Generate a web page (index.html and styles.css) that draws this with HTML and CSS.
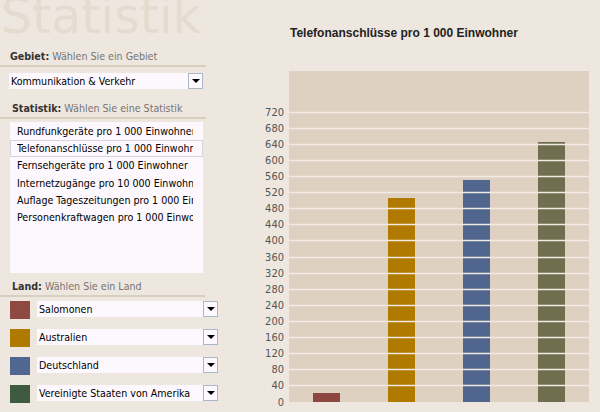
FILE: index.html
```html
<!DOCTYPE html>
<html lang="de">
<head>
<meta charset="utf-8">
<title>Statistik</title>
<link rel="stylesheet" href="styles.css">
</head>
<body>
<div class="page">
  <aside class="sidebar">
    <div class="brand">Statistik</div>

    <div class="heading h-gebiet"><b>Gebiet:</b> Wählen Sie ein Gebiet</div>
    <div class="select sel-gebiet">
      <span class="sel-text">Kommunikation &amp; Verkehr</span>
      <span class="sel-btn"><span class="tri"></span></span>
    </div>

    <div class="heading h-stat"><b>Statistik:</b> Wählen Sie eine Statistik</div>
    <ul class="listbox">
      <li><span class="item">Rundfunkgeräte pro 1 000 Einwohner</span></li>
      <li class="selected"><span class="item">Telefonanschlüsse pro 1 000 Einwohner</span></li>
      <li><span class="item">Fernsehgeräte pro 1 000 Einwohner</span></li>
      <li><span class="item">Internetzugänge pro 10 000 Einwohner</span></li>
      <li><span class="item">Auflage Tageszeitungen pro 1 000 Einwohner</span></li>
      <li><span class="item">Personenkraftwagen pro 1 000 Einwohner</span></li>
    </ul>

    <div class="heading h-land"><b>Land:</b> Wählen Sie ein Land</div>
    <div class="countries">
      <div class="country">
        <span class="swatch sw-red"></span>
        <div class="select sel-country"><span class="sel-text">Salomonen</span><span class="sel-btn"><span class="tri"></span></span></div>
      </div>
      <div class="country">
        <span class="swatch sw-gold"></span>
        <div class="select sel-country"><span class="sel-text">Australien</span><span class="sel-btn"><span class="tri"></span></span></div>
      </div>
      <div class="country">
        <span class="swatch sw-blue"></span>
        <div class="select sel-country"><span class="sel-text">Deutschland</span><span class="sel-btn"><span class="tri"></span></span></div>
      </div>
      <div class="country">
        <span class="swatch sw-green"></span>
        <div class="select sel-country"><span class="sel-text">Vereinigte Staaten von Amerika</span><span class="sel-btn"><span class="tri"></span></span></div>
      </div>
    </div>
  </aside>

  <main class="main">
    <h1 class="chart-title">Telefonanschlüsse pro 1 000 Einwohner</h1>
    <svg class="chart" width="360" height="341" viewBox="0 0 360 341">
      <rect class="plot" x="49" y="0" width="300" height="331"/>
      <g class="bars">
        <rect class="bar-red"   x="73"  y="322" width="27" height="9"/>
        <rect class="bar-gold"  x="148" y="127" width="27" height="204"/>
        <rect class="bar-blue"  x="223" y="109" width="27" height="222"/>
        <rect class="bar-olive" x="298" y="71"  width="27" height="260"/>
      </g>
      <g class="grid">
        <line x1="49" x2="349" y1="41.5" y2="41.5"/>
        <line x1="49" x2="349" y1="57.5" y2="57.5"/>
        <line x1="49" x2="349" y1="73.5" y2="73.5"/>
        <line x1="49" x2="349" y1="89.5" y2="89.5"/>
        <line x1="49" x2="349" y1="105.5" y2="105.5"/>
        <line x1="49" x2="349" y1="121.5" y2="121.5"/>
        <line x1="49" x2="349" y1="137.5" y2="137.5"/>
        <line x1="49" x2="349" y1="153.5" y2="153.5"/>
        <line x1="49" x2="349" y1="169.5" y2="169.5"/>
        <line x1="49" x2="349" y1="186.5" y2="186.5"/>
        <line x1="49" x2="349" y1="202.5" y2="202.5"/>
        <line x1="49" x2="349" y1="218.5" y2="218.5"/>
        <line x1="49" x2="349" y1="234.5" y2="234.5"/>
        <line x1="49" x2="349" y1="250.5" y2="250.5"/>
        <line x1="49" x2="349" y1="266.5" y2="266.5"/>
        <line x1="49" x2="349" y1="282.5" y2="282.5"/>
        <line x1="49" x2="349" y1="298.5" y2="298.5"/>
        <line x1="49" x2="349" y1="314.5" y2="314.5"/>
      </g>
      <g class="ylabels" text-anchor="end">
        <text x="44" y="45">720</text>
        <text x="44" y="61">680</text>
        <text x="44" y="77">640</text>
        <text x="44" y="93">600</text>
        <text x="44" y="109">560</text>
        <text x="44" y="125">520</text>
        <text x="44" y="141">480</text>
        <text x="44" y="157">440</text>
        <text x="44" y="173">400</text>
        <text x="44" y="190">360</text>
        <text x="44" y="206">320</text>
        <text x="44" y="222">280</text>
        <text x="44" y="238">240</text>
        <text x="44" y="254">200</text>
        <text x="44" y="270">160</text>
        <text x="44" y="286">120</text>
        <text x="44" y="302">80</text>
        <text x="44" y="318">40</text>
        <text x="44" y="335">0</text>
      </g>
    </svg>
  </main>
</div>
</body>
</html>
```

FILE: styles.css
```css
html, body {
  margin: 0;
  padding: 0;
}
body {
  width: 600px;
  height: 412px;
  overflow: hidden;
  background: #eee7df;
  font-family: "DejaVu Sans Condensed", "DejaVu Sans", sans-serif;
  font-size: 10.6px;
  color: #000;
}
.page {
  display: flex;
  width: 600px;
  height: 412px;
}
.sidebar {
  width: 240px;
  flex: none;
}
.brand {
  font-family: "DejaVu Sans", sans-serif;
  font-size: 49px;
  line-height: 40px;
  height: 40px;
  color: #e5dbcf;
  margin-top: -3px;
  margin-left: 1px;
  white-space: nowrap;
}
.heading {
  color: #757575;
  line-height: 14px;
  white-space: nowrap;
  border-bottom: 2px solid #d7d0c1;
  padding-bottom: 2px;
}
.heading b {
  color: #333;
  font-weight: bold;
}
.h-gebiet {
  margin-top: 12px;
  padding-left: 10px;
  width: 196px;
}
.h-stat {
  margin-top: 12px;
  padding-left: 12px;
  width: 194px;
}
.h-land {
  margin-top: 6px;
  padding-left: 12px;
  width: 193px;
}
.select {
  display: flex;
  align-items: stretch;
  height: 16px;
  background: #fdf8fd;
}
.sel-text {
  flex: 1;
  line-height: 16px;
  padding-left: 2px;
  white-space: nowrap;
  overflow: hidden;
}
.sel-btn {
  width: 13px;
  flex: none;
  border: 1px solid #a9b8c9;
  display: flex;
  align-items: center;
  justify-content: center;
}
.tri {
  width: 0;
  height: 0;
  border-left: 4px solid transparent;
  border-right: 4px solid transparent;
  border-top: 4px solid #000;
}
.sel-gebiet {
  margin-top: 6px;
  margin-left: 9px;
  width: 194px;
}
.listbox {
  list-style: none;
  margin: 3px 0 0 10px;
  padding: 1px 0 0 0;
  width: 193px;
  height: 150px;
  background: #fdf8fd;
  overflow: hidden;
}
.listbox li {
  height: 17.2px;
  line-height: 17.2px;
  padding-left: 7px;
  box-sizing: border-box;
}
.listbox li .item {
  display: block;
  width: 176px;
  white-space: nowrap;
  overflow: hidden;
}
.listbox li.selected {
  border: 1px solid #d8d4dc;
  line-height: 15.2px;
  padding-left: 6px;
}
.countries {
  display: flex;
  flex-direction: column;
  gap: 10px;
  margin-top: 4px;
  margin-left: 10px;
}
.country {
  display: flex;
  align-items: flex-start;
  gap: 7px;
}
.swatch {
  width: 20px;
  height: 18px;
  flex: none;
}
.sw-red { background: #8e4a41; }
.sw-gold { background: #b07a00; }
.sw-blue { background: #50678f; }
.sw-green { background: #3e5a3f; }
.sel-country {
  width: 181px;
}
.main {
  flex: 1;
  display: flex;
  flex-direction: column;
}
.chart-title {
  margin: 26px 0 0 50px;
  font-family: "Liberation Sans", Arial, sans-serif;
  font-size: 12px;
  line-height: 14px;
  font-weight: bold;
  color: #222;
}
.chart {
  display: block;
  margin-top: 31px;
}
.plot { fill: #dfd1c2; }
.grid line {
  stroke: #f2ebe3;
  stroke-width: 1.3;
}
.bar-red { fill: #8d473f; }
.bar-gold { fill: #b07a00; }
.bar-blue { fill: #50668f; }
.bar-olive { fill: #6f6f4f; }
.ylabels text {
  font-family: "DejaVu Sans Condensed", "DejaVu Sans", sans-serif;
  font-size: 11px;
  fill: #555;
}
```
